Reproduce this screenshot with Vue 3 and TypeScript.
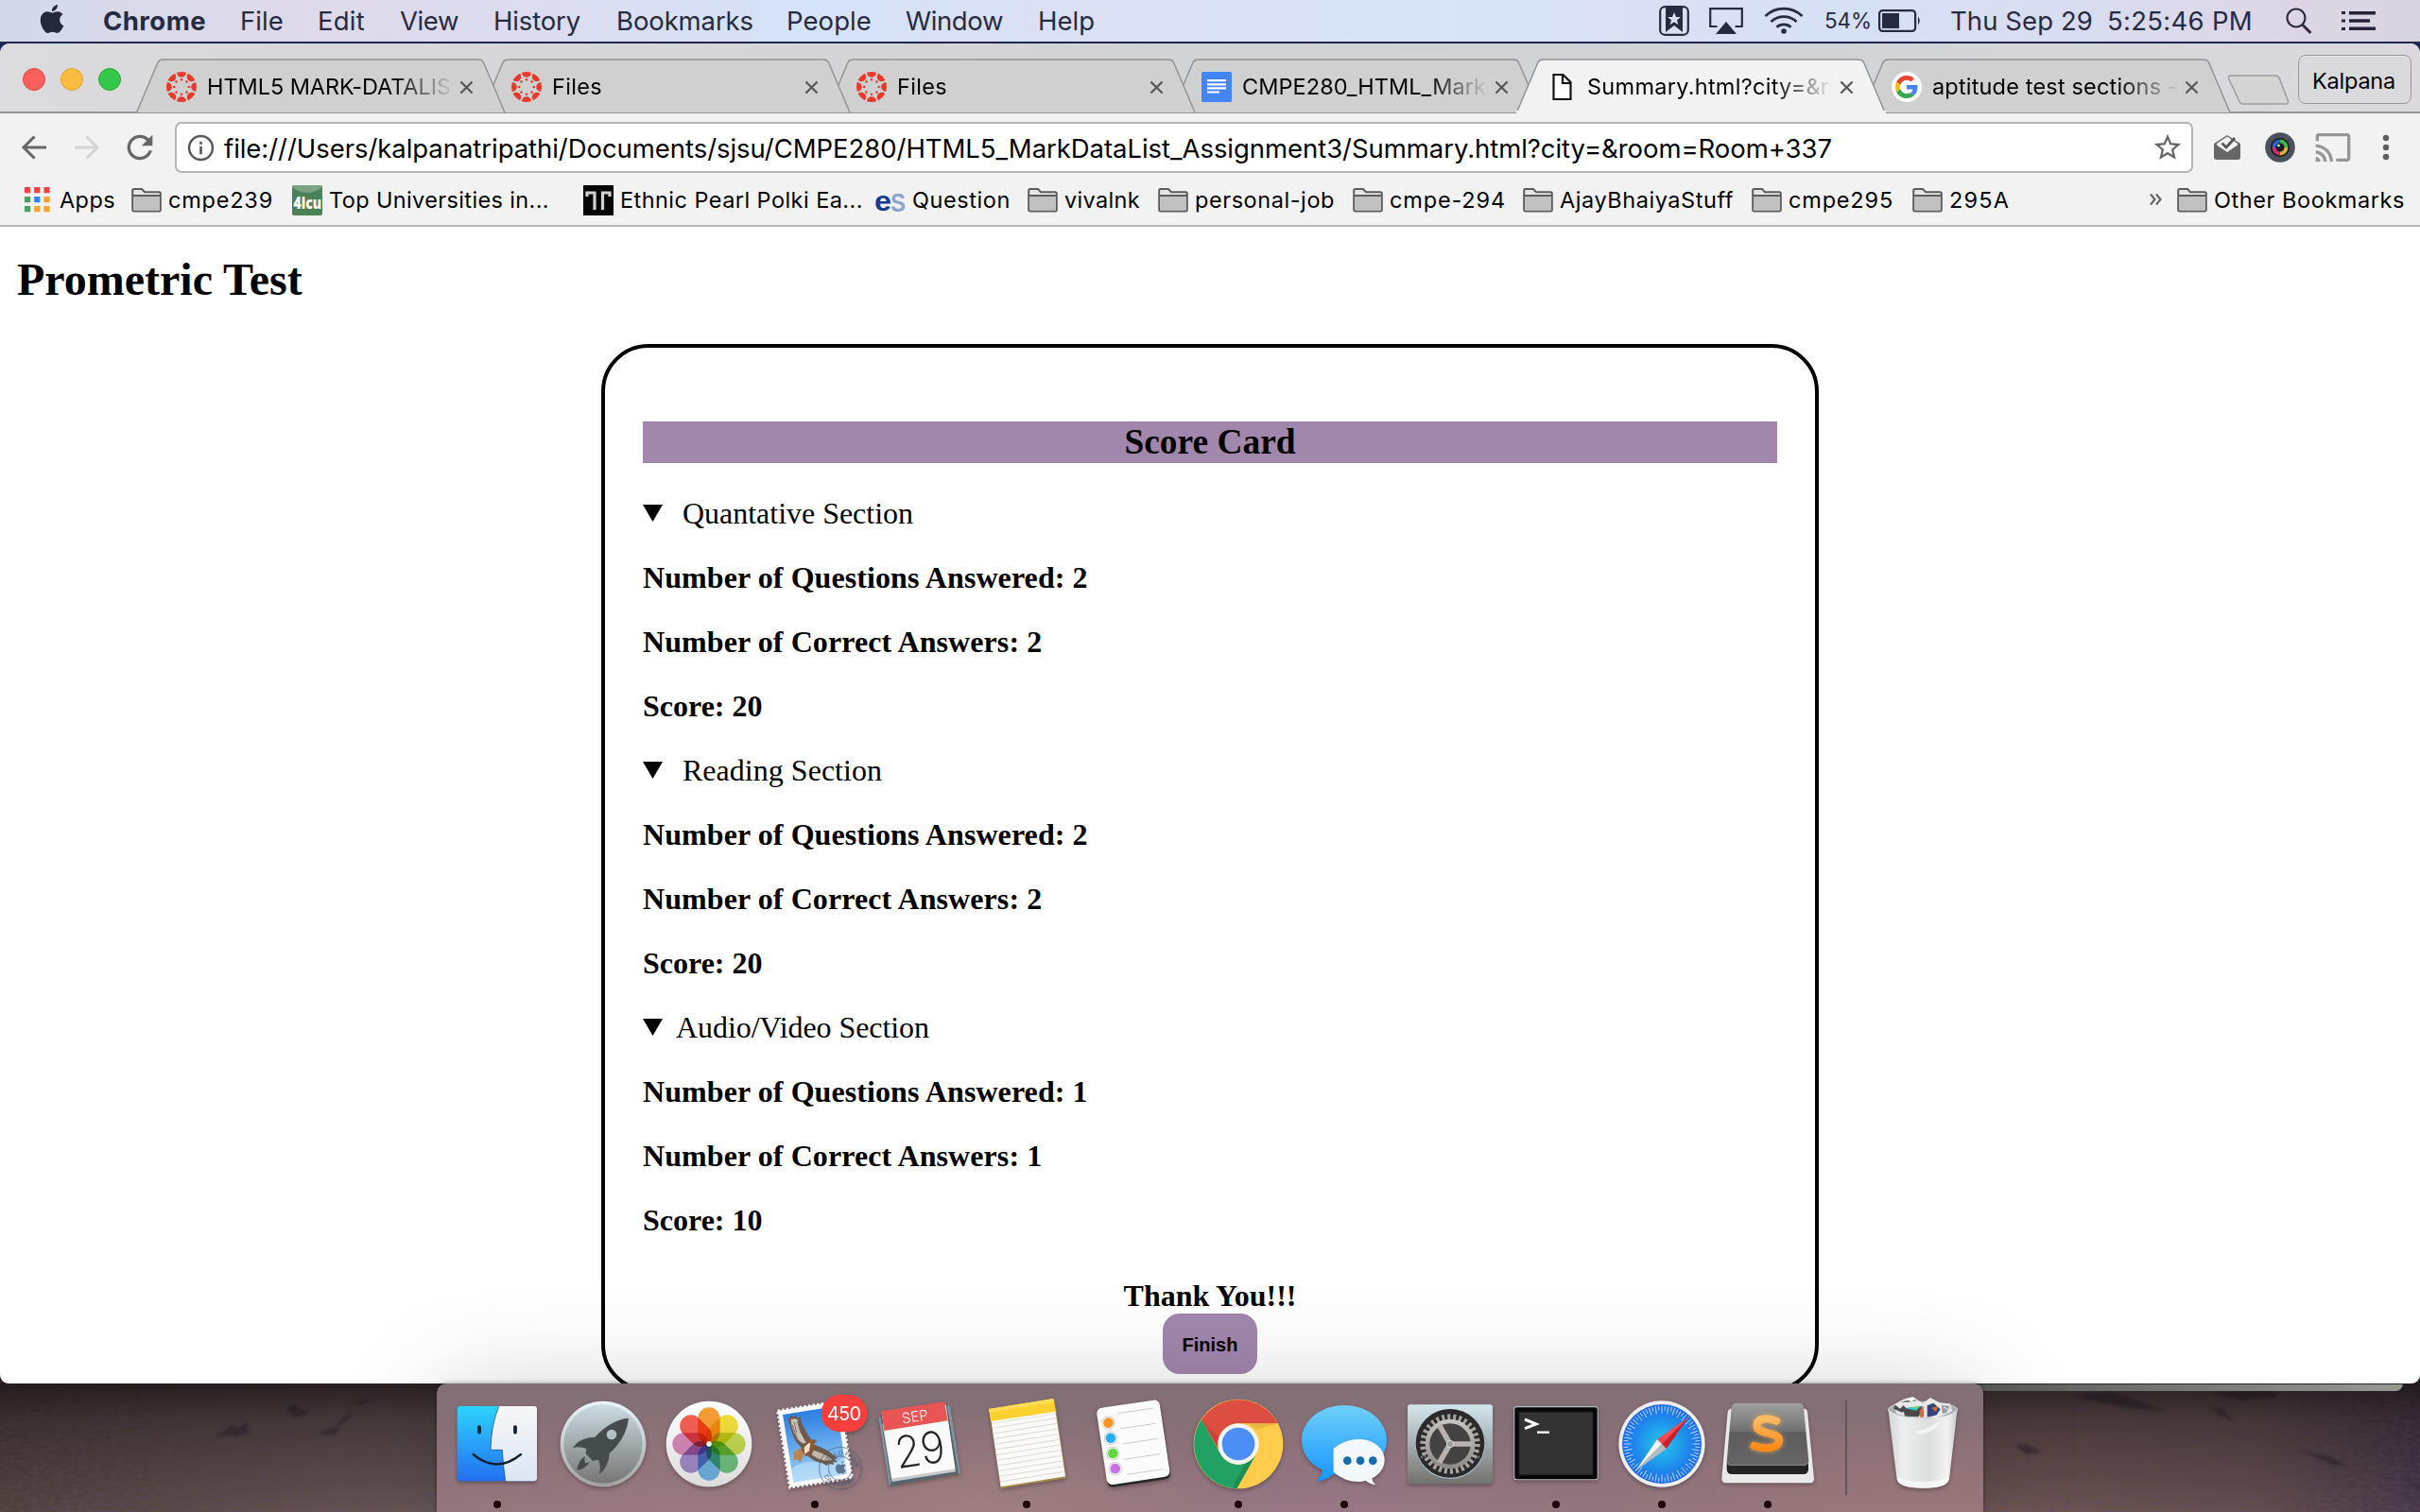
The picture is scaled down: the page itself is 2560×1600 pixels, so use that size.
<script setup lang="ts">
interface Fitted { text: string; w: number }
interface Bookmark extends Fitted { icon: 'apps' | 'folder' | 'icu' | 'tt' | 'es'; after: number }
interface Tab extends Fitted { icon: 'canvas' | 'docs' | 'file' | 'google'; active?: boolean }
interface Section { title: string; answered: number; correct: number; score: number; tight?: boolean; w: number }

// Tracks a label so that it takes the given width in pixels.
const vFit = {
  mounted(el: HTMLElement, binding: { value: number }) {
    const count = (el.textContent ?? '').length
    const natural = el.getBoundingClientRect().width
    el.style.letterSpacing = `${(binding.value - natural) / count}px`
  },
}

const menus: (Fitted & { x: number })[] = [
  { text: 'File', w: 46, x: 254 },
  { text: 'Edit', w: 50, x: 336 },
  { text: 'View', w: 62, x: 423 },
  { text: 'History', w: 92, x: 522 },
  { text: 'Bookmarks', w: 145, x: 652 },
  { text: 'People', w: 90, x: 832 },
  { text: 'Window', w: 103, x: 958 },
  { text: 'Help', w: 60, x: 1098 },
]

const tabs: Tab[] = [
  { icon: 'canvas', text: 'HTML5 MARK-DATALIS', w: 258 },
  { icon: 'canvas', text: 'Files', w: 53 },
  { icon: 'canvas', text: 'Files', w: 53 },
  { icon: 'docs', text: 'CMPE280_HTML_Mark', w: 258 },
  { icon: 'file', text: 'Summary.html?city=&r', w: 256, active: true },
  { icon: 'google', text: 'aptitude test sections -', w: 260 },
]

const bookmarks: Bookmark[] = [
  { icon: 'apps', text: 'Apps', w: 59, after: 17 },
  { icon: 'folder', text: 'cmpe239', w: 111, after: 20 },
  { icon: 'icu', text: 'Top Universities in...', w: 233, after: 36 },
  { icon: 'tt', text: 'Ethnic Pearl Polki Ea...', w: 257, after: 13 },
  { icon: 'es', text: 'Question', w: 104, after: 18 },
  { icon: 'folder', text: 'vivalnk', w: 80, after: 19 },
  { icon: 'folder', text: 'personal-job', w: 148, after: 19 },
  { icon: 'folder', text: 'cmpe-294', w: 123, after: 18 },
  { icon: 'folder', text: 'AjayBhaiyaStuff', w: 184, after: 19 },
  { icon: 'folder', text: 'cmpe295', w: 111, after: 20 },
  { icon: 'folder', text: '295A', w: 64, after: 0 },
]

const sections: Section[] = [
  { title: 'Quantative Section', answered: 2, correct: 2, score: 20, w: 244 },
  { title: 'Reading Section', answered: 2, correct: 2, score: 20, w: 211 },
  { title: 'Audio/Video Section', answered: 1, correct: 1, score: 10, tight: true, w: 268 },
]

const range = (n: number) => Array.from({ length: n }, (_, i) => i)
const petals = ['#fb9a2b', '#f3e02f', '#c3dc4c', '#6cc47c', '#6db6ea', '#a08bcb', '#d985b8', '#f9584a']
const reminders = ['#ff9422', '#29adf5', '#63d63f', '#c971e3']
const appColors = ['#f4433c', '#f4433c', '#f4433c', '#43a35c', '#2b87f5', '#f5a428', '#43a35c', '#f5a428', '#f5a428']
</script>

<template>
  <div class="desktop">
    <header class="menubar">
      <svg class="apple" viewBox="0 0 24 24"><path d="M12.152 6.896c-.948 0-2.415-1.078-3.96-1.04-2.04.027-3.91 1.183-4.961 3.014-2.117 3.675-.546 9.103 1.519 12.09 1.013 1.454 2.208 3.09 3.792 3.039 1.52-.065 2.09-.987 3.935-.987 1.831 0 2.35.987 3.96.948 1.637-.026 2.676-1.48 3.676-2.948 1.156-1.688 1.636-3.325 1.662-3.415-.039-.013-3.182-1.221-3.22-4.857-.026-3.04 2.48-4.494 2.597-4.559-1.429-2.09-3.623-2.324-4.39-2.376-2-.156-3.675 1.09-4.61 1.09zM15.53 3.83c.843-1.012 1.4-2.427 1.245-3.83-1.207.052-2.662.805-3.532 1.818-.78.896-1.454 2.338-1.273 3.714 1.338.104 2.715-.688 3.559-1.701" /></svg>
      <div class="slot app-name"><b v-fit="109">Chrome</b></div>
      <div v-for="(m, i) in menus" :key="m.text" class="slot" :style="{ width: ((menus[i + 1]?.x ?? 1200) - m.x) + 'px' }"><span v-fit="m.w">{{ m.text }}</span></div>
      <div class="status">
        <svg class="s-mark" viewBox="0 0 32 32"><rect x="1.2" y="1.2" width="29.6" height="29.6" rx="5" fill="none" stroke="#262b40" stroke-width="2.2" /><path d="M7 2h18v26l-9-7-9 7z" fill="#262b40" /><path d="M16 7l2 5h5l-4 3.300 1.500 5L16 17.200 11.500 20.300 13 15.300 9 12h5z" fill="#dbe0f4" /></svg>
        <svg class="s-air" viewBox="0 0 36 28"><path d="M8.500 20H1.200V1.200h33.600V20H27.500" fill="none" stroke="#262b40" stroke-width="2.200" /><path d="M18 15l11 13H7z" fill="#262b40" /></svg>
        <svg class="s-wifi" viewBox="0 0 42 29" fill="none" stroke="#262b40" stroke-width="2.800"><path d="M1.500 10a28 28 0 0 1 39 0M7.500 16a19.500 19.500 0 0 1 27 0M13.500 21.800a11 11 0 0 1 15 0" /><circle cx="21" cy="26" r="2.800" fill="#262b40" stroke="none" /></svg>
        <div class="s-pct"><span v-fit="50">54%</span></div>
        <svg class="s-bat" viewBox="0 0 46 24"><rect x="1.100" y="1.100" width="38" height="21.800" rx="3.500" fill="none" stroke="#262b40" stroke-width="2.200" /><rect x="4" y="4" width="18" height="16" fill="#262b40" /><path d="M42 7.500q3.500 4.500 0 9z" fill="#262b40" /></svg>
        <div class="s-date"><span v-fit="151">Thu Sep 29</span></div>
        <div class="s-time"><span v-fit="154">5:25:46 PM</span></div>
        <svg class="s-find" viewBox="0 0 28 28" fill="none" stroke="#2c2a3d"><circle cx="11" cy="11" r="9.500" stroke-width="2.200" /><path d="M17.500 18l9 9" stroke-width="3" /></svg>
        <svg class="s-list" viewBox="0 0 36 20" fill="#262338"><path d="M0 0h4v3H0zM8 0h28v3.500H8zM0 8.500h4v3H0zM8 8.300h22v3.500H8zM0 17h4v3H0zM8 16.500h28V20H8z" /></svg>
      </div>
    </header>

    <main class="window">
      <div class="tabstrip">
        <div class="lights"><i class="red" /><i class="amber" /><i class="green" /></div>
        <div class="tabs">
          <div v-for="(t, i) in tabs" :key="i" class="tab" :style="{ zIndex: t.active ? 10 : tabs.length - i }">
            <svg class="tab-shape" viewBox="0 0 392 58">
              <path d="M.5 57 23 4Q25 1 28 1H362Q366 1 367.500 4L390 57" :fill="t.active ? '#f2f2f2' : '#d0d0d0'" stroke="#929394" stroke-width="1.500" />
              <path v-if="t.active" d="M0 57h391" stroke="#f2f2f2" stroke-width="4" />
            </svg>
            <svg v-if="t.icon === 'canvas'" class="tab-icon" viewBox="-16 -16 32 32" fill="#e9392a">
              <g v-for="n in range(8)" :key="n" :transform="`rotate(${n * 45})`">
                <path d="M-5-15.200A16 16 0 0 1 5-15.200C4.600-8.600-4.600-8.600-5-15.200z" />
                <circle cy="-7.800" r="1.300" />
              </g>
            </svg>
            <svg v-else-if="t.icon === 'docs'" class="tab-icon" viewBox="0 0 32 32"><rect width="32" height="32" rx="1.500" fill="#4285f4" /><path d="M6 8h20v2.200H6zM6 12.200h20v2.200H6zM6 16.300h20v2.200H6zM6 20.400h13v2.200H6z" fill="#fff" /></svg>
            <svg v-else-if="t.icon === 'file'" class="tab-icon" viewBox="0 0 32 32"><path d="M7.500 3h10l8 8v18h-18zM17 3v9h8.500" fill="#fff" stroke="#111" stroke-width="2.200" /></svg>
            <svg v-else class="tab-icon" viewBox="-8 -8 64 64">
              <circle cx="24" cy="24" r="32" fill="#fff" />
              <path fill="#ea4335" d="M24 9.500c3.540 0 6.710 1.220 9.210 3.600l6.850-6.850C35.900 2.380 30.470 0 24 0 14.620 0 6.510 5.380 2.560 13.220l7.980 6.190C12.430 13.720 17.740 9.500 24 9.500z" />
              <path fill="#4285f4" d="M46.980 24.550c0-1.570-.15-3.090-.38-4.550H24v9.020h12.940c-.58 2.960-2.260 5.480-4.780 7.180l7.730 6c4.510-4.180 7.090-10.360 7.090-17.650z" />
              <path fill="#fbbc05" d="M10.530 28.590c-.48-1.450-.76-2.990-.76-4.590s.27-3.140.76-4.590l-7.980-6.190C.92 16.460 0 20.120 0 24c0 3.880.92 7.540 2.560 10.780l7.970-6.190z" />
              <path fill="#34a853" d="M24 48c6.480 0 11.930-2.130 15.890-5.810l-7.730-6c-2.150 1.450-4.920 2.300-8.160 2.300-6.260 0-11.570-4.220-13.470-9.910l-7.980 6.190C6.510 42.620 14.620 48 24 48z" />
            </svg>
            <div class="tab-title"><span v-fit="t.w">{{ t.text }}</span></div>
            <svg class="tab-close" viewBox="0 0 16 16"><path d="M1.500 1.500l13 13M14.500 1.500l-13 13" stroke="#555" stroke-width="2.300" /></svg>
          </div>
        </div>
        <svg class="newtab" viewBox="0 0 66 32"><path d="M4 1h47q3 0 4.500 3.500L64.500 28q.5 3-3 3H17q-3 0-4.500-3.500L1.500 4Q1 1 4 1z" fill="#d4d4d5" stroke="#9c9c9d" stroke-width="1.500" /></svg>
        <div class="profile"><span v-fit="88">Kalpana</span></div>
      </div>

      <div class="toolbar">
        <svg class="nav" viewBox="0 0 28 28" fill="none" stroke="#666" stroke-width="3"><path d="M27 14H3M14.500 2.500L3 14l11.500 11.500" /></svg>
        <svg class="nav fwd" viewBox="0 0 28 28" fill="none" stroke="#d2d2d2" stroke-width="3"><path d="M1 14h24M13.500 2.500L25 14 13.500 25.500" /></svg>
        <svg class="reload" viewBox="0 0 24 24" fill="#666"><path d="M17.650 6.350C16.200 4.900 14.210 4 12 4c-4.420 0-7.990 3.580-7.990 8s3.570 8 7.990 8c3.730 0 6.840-2.550 7.730-6h-2.080c-.82 2.330-3.040 4-5.650 4-3.310 0-6-2.690-6-6s2.690-6 6-6c1.660 0 3.140.69 4.220 1.780L13 11h7V4l-2.350 2.350z" /></svg>
        <div class="omnibox">
          <svg class="info" viewBox="0 0 28 28"><circle cx="14" cy="14" r="12" fill="none" stroke="#5a5a5a" stroke-width="2.400" /><path d="M12.700 12.500h2.600v8h-2.600zM12.700 7.500h2.600v2.800h-2.600z" fill="#5a5a5a" /></svg>
          <div class="url"><span v-fit="1701">file:///Users/kalpanatripathi/Documents/sjsu/CMPE280/HTML5_MarkDataList_Assignment3/Summary.html?city=&amp;room=Room+337</span></div>
          <svg class="star" viewBox="0 0 24 24" fill="#666"><path d="M22 9.240l-7.190-.62L12 2 9.190 8.630 2 9.240l5.460 4.730L5.820 21 12 17.270 18.180 21l-1.630-7.030L22 9.240zM12 15.400l-3.760 2.270 1-4.280-3.320-2.880 4.380-.38L12 6.100l1.710 4.040 4.380.38-3.320 2.880 1 4.280L12 15.400z" /></svg>
        </div>
        <svg class="inbox" viewBox="0 0 28 28"><path d="M0 10L14 1l14 9v14q0 3-3 3H3q-3 0-3-3z" fill="#676767" /><path d="M3 10L14 2.500 25 10v1.500L14 19 3 11.500z" fill="#f2f2f2" /><path d="M8.500 9.500l4.500 4.500 9-10" fill="none" stroke="#555" stroke-width="2.800" /></svg>
        <svg class="cam" viewBox="0 0 32 32">
          <circle cx="16" cy="16" r="15.800" fill="#4c525b" /><circle cx="16" cy="16" r="10" fill="#15161a" />
          <g fill="none" stroke-width="4"><path d="M16 9.500a6.500 6.500 0 0 1 6.500 6.500" stroke="#39b84b" /><path d="M22.500 16a6.500 6.500 0 0 1-6.500 6.500" stroke="#d4b23c" /><path d="M16 22.500A6.500 6.500 0 0 1 9.500 16" stroke="#d12c7b" /><path d="M9.500 16A6.500 6.500 0 0 1 16 9.500" stroke="#2d62cf" /></g>
          <circle cx="16" cy="16" r="3.500" fill="#1c1a26" /><circle cx="14.500" cy="14" r="1.300" fill="#fff" />
        </svg>
        <svg class="cast" viewBox="0 0 24 24" fill="#969696"><path d="M21 3H3c-1.100 0-2 .9-2 2v3h2V5h18v14h-7v2h7c1.100 0 2-.9 2-2V5c0-1.100-.9-2-2-2zM1 18v3h3c0-1.660-1.340-3-3-3zm0-4v2c2.760 0 5 2.240 5 5h2c0-3.870-3.130-7-7-7zm0-4v2c4.970 0 9 4.030 9 9h2c0-6.080-4.930-11-11-11z" /></svg>
        <svg class="dots" viewBox="0 0 8 28" fill="#5f5f5f"><circle cx="4" cy="4" r="3.200" /><circle cx="4" cy="14" r="3.200" /><circle cx="4" cy="24" r="3.200" /></svg>
      </div>

      <nav class="bookmarks">
        <div v-for="b in bookmarks" :key="b.text" class="bm" :style="{ marginRight: b.after + 'px' }">
          <svg v-if="b.icon === 'folder'" class="bm-icon" viewBox="0 0 32 32"><path d="M1.200 26V5.500q0-1.500 1.500-1.500H11l3 3.200h15.300q1.500 0 1.500 1.500V26q0 1.500-1.500 1.500H2.700Q1.200 27.500 1.200 26z" fill="#e6e6e6" stroke="#5c5c5c" stroke-width="2" /><path d="M2.200 12h27.600v14.500H2.200z" fill="#c1c1c1" /><path d="M1 11h30" stroke="#5c5c5c" stroke-width="1.800" /></svg>
          <svg v-else-if="b.icon === 'apps'" class="bm-icon apps" viewBox="0 0 32 32"><rect v-for="(c, n) in appColors" :key="n" :x="2 + (n % 3) * 10.200" :y="2 + Math.floor(n / 3) * 10" width="6.200" height="6.200" :fill="c" /></svg>
          <svg v-else-if="b.icon === 'icu'" class="bm-icon" viewBox="0 0 32 32"><rect width="32" height="32" rx="2" fill="#4b8158" /><path d="M0 2Q0 0 2 0H30q2 0 2 2Q16 14 0 2z" fill="#7aa283" /><text x="1.500" y="24.500" font-family="Open Sans, Liberation Sans, sans-serif" font-weight="800" font-size="18" textLength="29.500" lengthAdjust="spacingAndGlyphs" fill="#fff">4icu</text></svg>
          <svg v-else-if="b.icon === 'tt'" class="bm-icon" viewBox="0 0 32 32"><rect width="32" height="32" fill="#050505" /><path d="M4 12V8H12V26M28 12V8H20.500V26" fill="none" stroke="#d2d2d2" stroke-width="3.200" /></svg>
          <svg v-else class="bm-icon" viewBox="0 0 32 32"><text x="16" y="28" font-family="Liberation Sans, sans-serif" font-weight="700" font-size="28" textLength="16" lengthAdjust="spacingAndGlyphs" fill="#8fa6cb">S</text><text x="-1" y="27" font-family="Liberation Sans, sans-serif" font-weight="700" font-size="29" textLength="18" lengthAdjust="spacingAndGlyphs" fill="#173a91">e</text></svg>
          <div class="bm-label" :style="{ width: b.w + 'px' }"><span v-fit="b.w">{{ b.text }}</span></div>
        </div>
        <svg class="chev" viewBox="0 0 14 14" fill="none" stroke="#666" stroke-width="2.200"><path d="M1 1.500L5.500 7 1 12.500M7 1.500L11.500 7 7 12.500" /></svg>
        <svg class="bm-icon" viewBox="0 0 32 32"><path d="M1.200 26V5.500q0-1.500 1.500-1.500H11l3 3.200h15.300q1.500 0 1.500 1.500V26q0 1.500-1.500 1.500H2.700Q1.200 27.500 1.200 26z" fill="#e6e6e6" stroke="#5c5c5c" stroke-width="2" /><path d="M2.200 12h27.600v14.500H2.200z" fill="#c1c1c1" /><path d="M1 11h30" stroke="#5c5c5c" stroke-width="1.800" /></svg>
        <div class="bm-label"><span v-fit="202">Other Bookmarks</span></div>
      </nav>

      <div class="page">
        <h1>Prometric Test</h1>
        <section class="card">
          <h3>Score Card</h3>
          <div v-for="s in sections" :key="s.title" class="section">
            <p class="summary" :class="{ tight: s.tight }"><svg class="tri" viewBox="0 0 21 18"><path d="M0 0h21L10.500 18z" /></svg><span v-fit="s.w">{{ s.title }}</span></p>
            <p><b class="stat">Number of Questions Answered: {{ s.answered }}</b></p>
            <p><b class="stat">Number of Correct Answers: {{ s.correct }}</b></p>
            <p><b>Score: {{ s.score }}</b></p>
          </div>
          <div class="thanks">Thank You!!!</div>
          <button class="finish">Finish</button>
        </section>
      </div>
    </main>

    <footer class="bottom">
      <svg class="ground" viewBox="0 0 2560 136" preserveAspectRatio="none">
        <defs>
          <linearGradient id="gr-x"><stop offset="0" stop-color="#52413f" /><stop offset=".17" stop-color="#685655" /><stop offset=".83" stop-color="#705654" /><stop offset=".93" stop-color="#654f50" /><stop offset="1" stop-color="#483948" /></linearGradient>
          <linearGradient id="gr-y" x2="0" y2="1"><stop offset="0" stop-color="#0d0b0d" stop-opacity=".7" /><stop offset=".3" stop-color="#171114" stop-opacity=".4" /><stop offset="1" stop-color="#1b1416" stop-opacity=".02" /></linearGradient>
          <filter id="grain" x="0" y="0" width="100%" height="100%"><feTurbulence type="fractalNoise" baseFrequency=".12 .26" numOctaves="3" seed="8" /><feColorMatrix values="0 0 0 0 .12  0 0 0 0 .08  0 0 0 0 .12  1.200 0 0 0 -.46" /></filter>
          <filter id="soft"><feGaussianBlur stdDeviation="1.500" /></filter>
        </defs>
        <rect width="2560" height="136" fill="url(#gr-x)" />
        <rect width="2560" height="136" filter="url(#grain)" />
        <g fill="#2a2030" opacity=".55" filter="url(#soft)">
          <path d="M227 57l12-8 6-6 6 4 12-6-2 8 5 2-14 5-14-1zM303 26l10-4 4 6 12 0-8 6-10 2zM339 52l14-6 7 2-6 6-14 1zM352 46l20-16-4 8-8 6zM370 21l24-5-10 6z" />
          <path d="M2190 13l40-4 30 8 30 12-40-3zM2340 9l60-4 10 9-40 4zM2338 25l14 2 12 14-16-8zM2132 66l12-2 16 9-18 2zM2430 70l36 8 18 10-16-2zM2540 100l20 8v6z" />
        </g>
        <rect width="2560" height="136" fill="url(#gr-y)" />
      </svg>
      <div class="behind" />
      <div class="dock">
        <!-- Finder -->
        <div class="app run"><svg viewBox="90 108 336 300">
          <defs><linearGradient id="fi" x2="0" y2="1"><stop offset="0" stop-color="#2dd3fe" /><stop offset="1" stop-color="#2370f0" /></linearGradient><linearGradient id="fw" x2="0" y2="1"><stop offset="0" stop-color="#f7f6f7" /><stop offset="1" stop-color="#dae7f4" /></linearGradient></defs>
          <rect x="131" y="144" width="253" height="238" rx="10" fill="url(#fi)" />
          <path d="M263 144H374q10 0 10 10V372q0 10-10 10H284Q276 330 274 283H237Q238 205 263 144z" fill="url(#fw)" />
          <path d="M263 145Q238 205 237 283H274Q276 330 284 382" fill="none" stroke="#16598f" stroke-width="2.500" />
          <path d="M182 297Q256 360 333 297M201 209v18M315 209v18" fill="none" stroke="#13212e" stroke-width="7" stroke-linecap="round" /><path d="M201 210v17M315 210v17" stroke="#13212e" stroke-width="11" stroke-linecap="round" />
        </svg></div>
        <!-- Launchpad -->
        <div class="app"><svg viewBox="426 108 336 300">
          <defs><linearGradient id="la" x2="0" y2="1"><stop offset="0" stop-color="#cbdce2" /><stop offset="1" stop-color="#777675" /></linearGradient><linearGradient id="lr" x2="0" y2="1"><stop offset="0" stop-color="#e8f6fb" /><stop offset="1" stop-color="#a2a1a1" /></linearGradient></defs>
          <circle cx="594" cy="264" r="136" fill="url(#lr)" /><circle cx="594" cy="264" r="125" fill="url(#la)" />
          <path d="M675 182Q620 186 568 242 520 243 497 276 520 270 541 279L539 295 561 318 579 314Q588 332 582 361 613 334 614 294 668 246 675 182z" fill="#464b4e" /><path d="M536 303Q514 318 511 347 540 343 552 320 544 325 537 325 534 314 536 303z" fill="#464b4e" /><circle cx="621" cy="234" r="16" fill="#b5c0c4" />
        </svg></div>
        <!-- Photos -->
        <div class="app"><svg viewBox="762 108 336 300">
          <defs><linearGradient id="ph" x2="0" y2="1"><stop offset="0" stop-color="#fff" /><stop offset="1" stop-color="#dcdcdc" /></linearGradient></defs>
          <circle cx="930" cy="264" r="136" fill="url(#ph)" />
          <g class="petals"><rect v-for="(c, i) in petals" :key="c" x="895" y="148" width="70" height="114" rx="35" :fill="c" :transform="`rotate(${i * 45} 930 264)`" /></g>
          <circle cx="930" cy="264" r="8" fill="#fff" />
        </svg></div>
        <!-- Mail -->
        <div class="app run"><svg viewBox="1098 108 336 300">
          <defs><linearGradient id="ma" x2="0" y2="1"><stop offset="0" stop-color="#2a7fe0" /><stop offset="1" stop-color="#9ed2f6" /></linearGradient></defs>
          <g transform="rotate(-9 1266 264)">
            <rect x="1166" y="142" width="200" height="246" fill="#fafafa" /><rect x="1166" y="142" width="200" height="246" fill="none" stroke="#fafafa" stroke-width="9" stroke-dasharray="7 7" />
            <rect x="1180" y="156" width="172" height="218" fill="url(#ma)" />
            <path d="M1180 330q50-26 90-4t82-10v58h-172z" fill="#d5eafa" opacity=".45" />
          </g>
          <!-- left wing, right wing, tail, body and head of the eagle -->
          <path d="M1180 178L1186 184 1190 171 1197 180 1206 171 1209 182 1220 177 1221 190C1228 204 1236 226 1252 246L1262 268 1240 290C1224 276 1206 262 1198 240 1190 218 1184 200 1180 178z" fill="#6e5a4a" />
          <path d="M1190 186C1192 214 1202 244 1226 262L1240 262C1226 240 1214 214 1212 188L1204 184z" fill="#c9c2b8" />
          <path d="M1200 194l8 34M1210 192l12 40M1194 204l16 42" stroke="#7b6a5b" stroke-width="3" />
          <path d="M1256 264C1284 272 1312 284 1338 310L1328 312 1338 322 1324 321 1326 330 1310 326 1304 333 1290 324C1270 322 1254 312 1242 300z" fill="#6e5a4a" />
          <path d="M1262 284C1282 290 1306 300 1322 314L1300 318C1282 314 1268 308 1256 298z" fill="#c2b7a8" />
          <path d="M1238 278L1232 298 1220 322 1210 314 1200 316 1197 292 1216 280z" fill="#b98552" />
          <path d="M1222 282C1232 262 1244 250 1258 250Q1270 248 1272 256L1264 264C1262 282 1252 298 1238 304z" fill="#8a5a36" /><path d="M1232 276q10-14 20-16l-4 26-14 10z" fill="#efe3d0" />
          <g fill="none" stroke="#4a5a78" opacity=".5" stroke-width="4"><circle cx="1347" cy="341" r="67" /><circle cx="1347" cy="341" r="38" /></g>
          <path id="pm-top" d="M1299 347a48 48 0 0 1 96 0" fill="none" /><path id="pm-bot" d="M1289 341a58 58 0 0 0 116 0" fill="none" />
          <g font-family="Liberation Sans, sans-serif" font-weight="700" font-size="19" fill="#46536d" opacity=".65"><text><textPath href="#pm-top" startOffset="18">HELLO FROM</textPath></text><text><textPath href="#pm-bot" startOffset="26">CALIFORNIA</textPath></text></g>
          <path transform="translate(1328 319) scale(1.650)" fill="#43536f" opacity=".75" d="M12.152 6.896c-.948 0-2.415-1.078-3.960-1.040-2.040.027-3.910 1.183-4.961 3.014-2.117 3.675-.546 9.103 1.519 12.090 1.013 1.454 2.208 3.090 3.792 3.039 1.520-.065 2.090-.987 3.935-.987 1.831 0 2.350.987 3.960.948 1.637-.026 2.676-1.480 3.676-2.948 1.156-1.688 1.636-3.325 1.662-3.415-.039-.013-3.182-1.221-3.220-4.857-.026-3.040 2.480-4.494 2.597-4.559-1.429-2.090-3.623-2.324-4.390-2.376-2-.156-3.675 1.090-4.610 1.090zM15.530 3.830c.843-1.012 1.400-2.427 1.245-3.830-1.207.052-2.662.805-3.532 1.818" />
          <rect x="1286" y="108" width="146" height="118" rx="59" fill="#f53f3c" /><text x="1359" y="189" text-anchor="middle" font-family="Inter, sans-serif" font-size="60" textLength="108" fill="#fff">450</text>
        </svg></div>
        <!-- Calendar -->
        <div class="app"><svg viewBox="54 108 336 300">
          <path d="M88 178L315 142 348 358 122 396z" fill="#54656e" /><path d="M88 178l6-1 34 212-6 7zM306 143l9-1 33 216-6 2z" fill="#8296a0" />
          <path d="M100 200L305 170 333 352 131 384z" fill="#c9c9c9" /><path d="M98 165L302 140 331 343 130 374z" fill="#fafafa" />
          <path d="M97 160L297 130 308 190 106 222z" fill="#e85552" />
          <g transform="rotate(-8.500 205 180)" font-family="Inter, sans-serif" text-anchor="middle"><text x="204" y="193" font-size="46" font-weight="300" textLength="84" lengthAdjust="spacingAndGlyphs" fill="#fff">SEP</text><text x="204" y="332" font-size="138" font-weight="200" textLength="158" lengthAdjust="spacingAndGlyphs" fill="#1e1e1e" stroke="#1e1e1e" stroke-width="1">29</text></g>
        </svg></div>
        <!-- Notes -->
        <div class="app run"><svg viewBox="390 108 336 300">
          <path d="M440 160L648 128 683 373 476 405z" fill="#a98c4d" /><path d="M444 180L648 150 681 367 476 400z" fill="#fbfaf8" />
          <path v-for="n in range(11)" :key="n" :d="`M${449 + n * 2.400} ${214 + n * 17}L${652 + n * 2.400} ${182 + n * 17}`" stroke="#c9c9c6" stroke-width="2" />
          <path d="M438 153L643 120 650 161 444 192z" fill="#fbd12f" /><path d="M438 153L643 120 645 131 440 164z" fill="#ffdc58" /><path d="M446 199L650 168" stroke="#8c8c88" stroke-width="2" stroke-dasharray="2 4" />
        </svg></div>
        <!-- Reminders -->
        <div class="app"><svg viewBox="726 108 336 300">
          <g transform="rotate(-8.500 896 262)"><rect x="797" y="142" width="202" height="248" rx="18" fill="#26292b" /><rect x="796" y="136" width="202" height="246" rx="18" fill="#fbfbfb" />
            <g v-for="(c, i) in reminders" :key="c"><circle cx="828" :cy="186 + i * 49" r="20" fill="#fff" stroke="#cfcfcf" stroke-width="3" /><circle cx="828" :cy="186 + i * 49" r="16" :fill="c" /></g>
            <path v-for="n in range(5)" :key="n" :d="`M862 ${161 + n * 49}H976`" stroke="#c5c5c5" stroke-width="2.500" />
          </g>
        </svg></div>
        <!-- Chrome -->
        <div class="app run"><svg viewBox="1062 108 336 300">
          <circle cx="1230" cy="264" r="142" fill="#ffcd4b" />
          <path d="M1113 186A142 142 0 0 1 1356 199H1230A65 65 0 0 0 1167 281z" fill="#dd4d42" />
          <path d="M1113 186A142 142 0 0 0 1225 406L1285 299A65 65 0 0 1 1174 297z" fill="#21a164" />
          <path d="M1262 199h94l-70 20z" fill="#e3ae3c" opacity=".7" /><path d="M1225 406l-14-4 40-76 34-27z" fill="#168048" opacity=".6" /><path d="M1113 186l54 95 8-30z" fill="#b53a36" opacity=".5" />
          <circle cx="1230" cy="264" r="65" fill="#f4f4f4" /><circle cx="1230" cy="264" r="52" fill="#4d8df6" />
        </svg></div>
        <!-- Messages -->
        <div class="app run"><svg viewBox="18 108 336 300">
          <defs><linearGradient id="me" x2="0" y2="1"><stop offset="0" stop-color="#6fd0f9" /><stop offset="1" stop-color="#1596ff" /></linearGradient></defs>
          <path d="M186 141C260 141 321 190 321 252S260 363 186 363Q168 363 152 360 128 382 97 382 117 364 116 346C76 328 51 293 51 252 51 190 112 141 186 141z" fill="url(#me)" />
          <path d="M233 249C278 249 314 278 314 315 314 340 298 361 274 373Q275 385 285 394 264 390 254 380 243 384 233 384 188 384 152 353 152 315 152 278 188 249 233 249z" fill="#f3f8fd" />
          <g fill="#176cab"><circle cx="196" cy="317" r="13" /><circle cx="237" cy="317" r="13" /><circle cx="277" cy="317" r="13" /></g>
        </svg></div>
        <!-- System Preferences -->
        <div class="app"><svg viewBox="354 108 336 300">
          <defs><linearGradient id="sp" x2="0" y2="1"><stop offset="0" stop-color="#d4e7ed" /><stop offset="1" stop-color="#73716e" /></linearGradient><linearGradient id="sg" x2="0" y2="1"><stop offset="0" stop-color="#c9c4c1" /><stop offset="1" stop-color="#918c89" /></linearGradient></defs>
          <rect x="387" y="139" width="270" height="252" rx="9" fill="url(#sp)" /><circle cx="522" cy="264" r="111" fill="#a9b9c4" /><circle cx="522" cy="262" r="109" fill="#2a2a2b" />
          <g fill="none" stroke="#8e8985"><path d="M430 308a26 26 0 0 1 42 28M614 308a26 26 0 0 0-42 28" stroke-width="9" stroke-dasharray="6 5" opacity=".7" /></g>
          <circle cx="522" cy="264" r="86" fill="none" stroke="#aaa5a2" stroke-width="18" stroke-dasharray="9 9.010" />
          <circle cx="522" cy="264" r="72" fill="#444242" stroke="url(#sg)" stroke-width="14" />
          <path d="M522 264H590M522 264L488 205M522 264L488 323" stroke="#b8b3af" stroke-width="17" /><circle cx="522" cy="264" r="11" fill="#9aa0a2" stroke="#dedad6" stroke-width="3" />
        </svg></div>
        <!-- Terminal -->
        <div class="app run"><svg viewBox="690 108 336 300">
          <rect x="724" y="144" width="268" height="235" rx="9" fill="#b3c0c6" /><rect x="727" y="148" width="262" height="228" rx="6" fill="#050505" /><rect x="741" y="163" width="234" height="199" fill="#333" stroke="#202020" stroke-width="4" />
          <path d="M759 186l36 15-36 14" fill="none" stroke="#fff" stroke-width="9" /><path d="M798 227h39" stroke="#fff" stroke-width="7" />
        </svg></div>
        <!-- Safari -->
        <div class="app run"><svg viewBox="-114 108 336 300">
          <defs><radialGradient id="sa"><stop offset="0" stop-color="#23c8e8" /><stop offset="1" stop-color="#1d6af0" /></radialGradient></defs>
          <circle cx="54" cy="264" r="137" fill="#f0efee" /><circle cx="54" cy="264" r="126" fill="url(#sa)" />
          <path v-for="n in range(72)" :key="n" :d="n % 2 ? 'M54 143v14' : 'M54 143v24'" :transform="`rotate(${n * 5} 54 264)`" stroke="#d6ebfb" stroke-width="2.500" />
          <path d="M140 178L39 250 54 264z" fill="#fb4a4e" /><path d="M140 178L68 279 54 264z" fill="#d21d24" /><path d="M-30 350L39 250 54 264z" fill="#f4f4f4" /><path d="M-30 350L68 279 54 264z" fill="#b7bcc0" />
        </svg></div>
        <!-- Sublime Text -->
        <div class="app run"><svg viewBox="222 108 336 300">
          <defs><linearGradient id="su" x2="0" y2="1"><stop offset="0" stop-color="#a0a0a0" /><stop offset=".46" stop-color="#6f6f6f" /><stop offset=".47" stop-color="#5c5c5c" /><stop offset="1" stop-color="#666" /></linearGradient><linearGradient id="ss" x2="0" y2="1"><stop offset="0" stop-color="#ffbb62" /><stop offset="1" stop-color="#ff8a17" /></linearGradient><filter id="glow" x="-50%" y="-50%" width="200%" height="200%"><feGaussianBlur stdDeviation="8" /></filter></defs>
          <path d="M272 152H508Q515 154 516 162L537 374Q536 388 523 388H257Q245 387 244 374L263 162Q265 153 272 152z" fill="#e9e9e9" />
          <path d="M260 322H519V346Q518 360 504 360H276Q261 360 260 346z" fill="#242424" />
          <path d="M290 134H490Q503 135 504 147L520 318Q520 330 508 332H272Q260 331 260 320L275 147Q278 135 290 134z" fill="url(#su)" /><path d="M262 322Q264 331 272 331H508Q516 331 518 322" fill="none" stroke="#8b8b8b" stroke-width="3" />
          <path d="M419 192C385 176 356 186 356 205C356 238 426 224 426 252C426 280 380 282 346 270" fill="none" stroke="#ffb257" stroke-width="26" stroke-linecap="round" filter="url(#glow)" opacity=".65" />
          <path d="M417 191C385 178 355 184 355 205C355 238 426 222 426 252C426 278 382 283 347 270" fill="none" stroke="url(#ss)" stroke-width="24" stroke-linecap="round" />
        </svg></div>
        <div class="divider" />
        <!-- Trash -->
        <div class="app"><svg viewBox="714 108 336 300">
          <defs><linearGradient id="tr"><stop offset="0" stop-color="#d2d4d7" /><stop offset=".2" stop-color="#eceded" /><stop offset=".6" stop-color="#dcdddd" /><stop offset=".85" stop-color="#f2f2f2" /><stop offset="1" stop-color="#c9cbcd" /></linearGradient></defs>
          <ellipse cx="882" cy="155" rx="110" ry="24" fill="#aaaeb1" />
          <path d="M788 140L820 122 850 114 872 128 882 134 906 117 938 134 968 136 976 160 930 180H840L800 168z" fill="#e8e8e8" /><path d="M792 138l18 14 10-10 14 12-18 10-26-12zM820 152l60-8-10 34-44 2z" fill="#4a4a4c" /><path d="M826 150L878 143 860 158z" fill="#2fc8c2" /><path d="M846 148l22-4-4 8z" fill="#7ddc55" /><path d="M872 160l12-18 2 38-12 0z" fill="#d46a3a" /><path d="M896 142l20-8 22 20-12 18-30 8z" fill="#34457d" /><path d="M910 150l20-6-6 18z" fill="#d56f2f" /><path d="M942 140l26 4-10 20-14 4z" fill="#9a9c9e" /><path d="M812 132l30-10 24 4-30 6z" fill="#777" /><path d="M832 122l26-4-10 10zM948 146l14 10" fill="#fff" stroke="#fff" stroke-width="3" />
          <path d="M772 152Q790 180 882 181T992 152L966 376Q958 404 882 404T800 376z" fill="url(#tr)" /><path d="M850 224Q900 220 935 190 930 226 870 233z" fill="#f8f8f8" opacity=".8" /><path d="M801 368Q830 384 882 384T966 368L964 380Q956 404 882 404T801 378z" fill="#fafafa" opacity=".8" />
          <ellipse cx="882" cy="155" rx="110" ry="25" fill="none" stroke="#e9eaeb" stroke-width="3" opacity=".7" />
        </svg></div>
      </div>
    </footer>
  </div>
</template>

<style>
body { margin: 0; background: #2b2226; }
</style>

<style scoped>
* { box-sizing: border-box; }
svg { display: block; flex: none; overflow: visible; }
.desktop { width: 2560px; height: 1600px; display: flex; flex-direction: column; overflow: hidden; background: linear-gradient(#1d2750 0, #1d2750 700px, #2a2226 900px); font-family: Inter, "Liberation Sans", sans-serif; color: #000; }
span, .app-name b { display: inline-block; white-space: pre; }

.menubar { height: 44px; flex: none; margin-bottom: 2px; display: flex; align-items: center; font-size: 27.500px; line-height: 44px; color: #262b40; background: linear-gradient(90deg, #d3d9e9, #ded9ea 12%, #dcdcf0 23%, #d5e3f8 33%, #dbe0f5 45%, #d7e4f8 62%, #dcdff4 68%, #d6e1f6 76%, #d9dcf0 86%, #ddd5e5 95%, #d6d4df); }
.apple { width: 30px; height: 30px; margin-left: 40px; margin-top: -4px; fill: #24283a; }
.slot { flex: none; }
.app-name { width: 145px; margin-left: 39px; }
.status { flex: 1; display: flex; align-items: center; margin-left: 555px; }
.s-mark { width: 32px; height: 32px; }
.s-air { width: 36px; height: 28px; margin-left: 21px; }
.s-wifi { width: 42px; height: 29px; margin-left: 22px; margin-top: -2px; }
.s-pct { width: 57px; margin-left: 22px; font-size: 22.500px; }
.s-bat { width: 46px; height: 24px; }
.s-date { width: 166px; margin-left: 30px; }
.s-time { width: 189px; }
.s-find { width: 28px; height: 28px; }
.s-list { width: 36px; height: 20px; margin-left: 31px; }

.window { height: 1418px; flex: none; display: flex; flex-direction: column; border-radius: 10px 10px 9px 9px; overflow: hidden; background: #fff; }
.tabstrip { height: 74px; flex: none; display: flex; align-items: flex-end; background: linear-gradient(90deg, #dbdbdd, #d4d4d6 35%, #d0d2d5 70%, #dbd9dd); box-shadow: inset 0 -2px #929394; }
.lights { display: flex; gap: 16px; margin: 0 16px 24px 24px; }
.lights i { width: 24px; height: 24px; border-radius: 50%; border: 1px solid #e2463f; background: #fc605b; }
.lights .amber { background: #fdbc40; border-color: #dfa033; }
.lights .green { background: #34c84a; border-color: #27aa35; }
.tabs { display: flex; }
.tab { position: relative; width: 391.500px; margin-right: -26.500px; height: 58px; display: flex; align-items: center; padding-left: 31.500px; }
.tab-shape { position: absolute; left: 0; top: 0; width: 392px; height: 58px; }
.tab-icon { position: relative; width: 32px; height: 32px; margin-top: 2px; }
.tab-title { position: relative; margin-left: 11.500px; margin-top: 2px; width: 261px; overflow: hidden; font-size: 23.500px; line-height: 32px; mask-image: linear-gradient(90deg, #000 75%, transparent 100%); }
.tab-close { position: relative; width: 15px; height: 15px; margin-left: 6px; margin-top: 2px; }
.newtab { width: 66px; height: 32px; margin: 0 0 9px 22px; }
.profile { width: 120px; height: 52px; margin: 0 0 10px 9px; border: 1.500px solid #98989a; border-radius: 8px; background: #dad9dc; font-size: 23.500px; line-height: 53px; padding-left: 14px; box-shadow: inset 0 1px #e8e8ea; }

.toolbar { height: 72px; flex: none; display: flex; align-items: center; background: #f2f2f2; }
.nav { width: 28px; height: 28px; margin-left: 22px; }
.fwd { margin-left: 28px; }
.reload { width: 40px; height: 40px; margin-left: 22px; }
.omnibox { width: 2135px; height: 54px; margin-left: 17px; padding-left: 11px; display: flex; align-items: center; background: #fff; border: 2px solid #b6b6b6; border-radius: 7px; }
.info { width: 29px; height: 29px; }
.url { width: 2039px; margin-left: 10px; padding-top: 2px; font-size: 27.500px; line-height: 48px; }
.star { width: 34px; height: 34px; margin-left: 0; }
.inbox { width: 28px; height: 28px; margin-left: 22px; }
.cam { width: 32px; height: 32px; margin-left: 26px; }
.cast { width: 40px; height: 40px; margin-left: 20px; }
.dots { width: 8px; height: 28px; margin-left: 32px; }

.bookmarks { height: 48px; flex: none; display: flex; align-items: center; padding: 0 16px 7px 24px; background: #f2f2f2; border-bottom: 2px solid #b6b6b6; font-size: 23.500px; line-height: 32px; }
.bm { display: flex; align-items: center; flex: none; }
.bm-icon { width: 32px; height: 32px; }
.bm-label { margin-left: 7px; flex: none; }
.chev { width: 14px; height: 14px; margin: 0 15px 2px auto; }

.page { flex: 1; padding: 28px 0 0 18px; font-family: "Liberation Serif", serif; }
h1 { margin: 0; font-size: 48px; line-height: 56px; }
.card { margin: 40px 0 0 618px; width: 1288px; height: 1109px; border: 4px solid #000; border-radius: 50px; padding: 78px 40px 0; font-size: 32px; line-height: 36px; display: flex; flex-direction: column; }
h3 { margin: 0 0 3px; height: 44px; background: #a287ad; text-align: center; font-size: 37.440px; line-height: 44px; }
p { margin: 32px 0 0; }
.stat { letter-spacing: .08px; }
.summary { display: flex; align-items: center; }
.tri { width: 21px; height: 18px; margin-right: 21px; }
.tight .tri { margin-right: 14px; }
.thanks { margin-top: 44px; text-align: center; font-weight: 700; }
.finish { align-self: center; flex: none; width: 100px; height: 64px; margin-top: 1px; border: 0; border-radius: 18px; background: #a287ad; font: bold 20px "Liberation Sans", sans-serif; color: #000; padding: 2px 0 0; }

.bottom { position: relative; height: 136px; flex: none; display: flex; justify-content: center; }
.ground { position: absolute; inset: 0; width: 2560px; height: 136px; overflow: hidden; }
.behind { position: absolute; top: 0; left: 1900px; width: 642px; height: 8px; border-radius: 0 0 8px; background: linear-gradient(90deg, #444, #5d5e5b 35%, #969892); border-top: 1px solid #222; }
.dock { position: relative; width: 1636px; height: 136px; display: flex; padding-left: 8px; border-radius: 10px 10px 0 0; background: radial-gradient(ellipse 300px 120px at 16% 100%, #9a7a7eaa, transparent), radial-gradient(ellipse 260px 110px at 35% 100%, #a5837faa, transparent), radial-gradient(ellipse 260px 100px at 58% 100%, #98778699, transparent), radial-gradient(ellipse 320px 100px at 95% 100%, #9b7776aa, transparent), linear-gradient(#816f74, #8a7079 50%, #93767f); box-shadow: 0 0 110px rgba(0, 0, 0, .16), 0 0 5px rgba(0, 0, 0, .4); }
.app { position: relative; width: 112px; padding-top: 12px; flex: none; }
.app svg { width: 112px; height: 100px; filter: drop-shadow(0 2px 2px rgba(0, 0, 0, .3)); }
.run::after { content: ""; position: absolute; left: 52px; top: 124px; width: 8px; height: 8px; border-radius: 50%; background: #1b0308; }
.petals rect { mix-blend-mode: multiply; opacity: .95; }
.divider { width: 2px; height: 100px; margin: 18px 24px 0 26px; background: #65535a; }
</style>
